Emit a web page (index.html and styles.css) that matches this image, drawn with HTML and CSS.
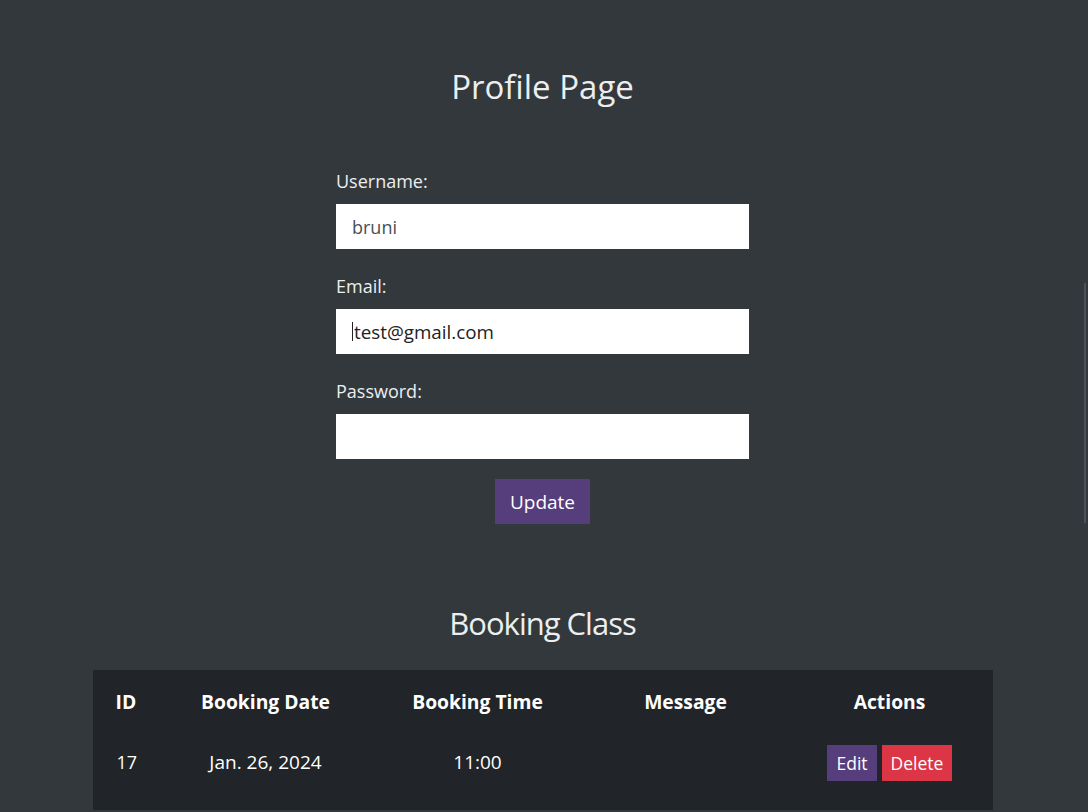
FILE: index.html
```html
<!DOCTYPE html>
<html lang="en">
<head>
<meta charset="utf-8">
<title>Profile Page</title>
<link rel="stylesheet" href="styles.css">
</head>
<body>
<main class="page">
  <h1 class="title">Profile Page</h1>
  <form class="profile-form">
    <div class="field">
      <label class="label" for="username">Username:</label>
      <input class="input input-muted" id="username" type="text" value="bruni">
    </div>
    <div class="field">
      <label class="label" for="email">Email:</label>
      <div class="input-wrap">
        <input class="input input-dark" id="email" type="text" value="test@gmail.com">
        <span class="caret"></span>
      </div>
    </div>
    <div class="field">
      <label class="label" for="password">Password:</label>
      <input class="input" id="password" type="password" value="">
    </div>
    <div class="actions">
      <button type="button" class="btn btn-purple btn-update">Update</button>
    </div>
  </form>

  <h2 class="title title-second">Booking Class</h2>
  <div class="table-wrap">
    <table class="table">
      <colgroup>
        <col class="c-id"><col class="c-date"><col class="c-time"><col class="c-msg"><col class="c-act">
      </colgroup>
      <thead>
        <tr><th>ID</th><th>Booking Date</th><th>Booking Time</th><th>Message</th><th>Actions</th></tr>
      </thead>
      <tbody>
        <tr>
          <td>17</td>
          <td>Jan. 26, 2024</td>
          <td>11:00</td>
          <td></td>
          <td><div class="row-actions"><button type="button" class="btn btn-purple btn-sm btn-edit">Edit</button><button type="button" class="btn btn-red btn-sm btn-delete">Delete</button></div></td>
        </tr>
      </tbody>
    </table>
  </div>
</main>
<div class="scroll-thumb"></div>
</body>
</html>
```

FILE: styles.css
```css
* { box-sizing: border-box; }
html, body { margin: 0; padding: 0; }
body {
  background: #33383c;
  color: #eceef0;
  font-family: "Open Sans", "Noto Sans", sans-serif;
  height: 812px;
  overflow: hidden;
}
.page {
  width: 1085px;
  display: flex;
  flex-direction: column;
  align-items: center;
}
.title {
  margin: 66px 0 0;
  font-size: 33px;
  font-weight: 400;
  line-height: 41px;
  color: #eceef0;
}
.profile-form {
  width: 413px;
  margin-top: 62px;
  display: flex;
  flex-direction: column;
}
.field {
  display: flex;
  flex-direction: column;
  margin-bottom: 25px;
}
.label {
  font-size: 18px;
  line-height: 24px;
  margin-bottom: 11px;
  color: #eceef0;
}
.input-wrap { position: relative; }
.input {
  width: 413px;
  height: 45px;
  border: 0;
  border-radius: 0;
  background: #fff;
  padding: 0 16px;
  font-family: inherit;
  font-size: 18px;
  outline: none;
}
.input-muted { color: #495057; }
.input-dark {
  color: #222;
  font-size: 18.8px;
  padding-left: 18px;
}
.caret {
  position: absolute;
  left: 16px;
  top: 13px;
  width: 1px;
  height: 19px;
  background: #222;
}
.actions {
  display: flex;
  justify-content: center;
  margin-top: -5px;
}
.btn {
  border: 0;
  border-radius: 0;
  color: #fff;
  font-family: inherit;
  cursor: pointer;
}
.btn-purple { background: #563d7c; }
.btn-red { background: #dc3545; }
.btn-update {
  width: 95px;
  height: 45px;
  font-size: 19px;
}
.title-second {
  margin-top: 79px;
  font-size: 31px;
  letter-spacing: -1px;
}
.table-wrap {
  width: 900px;
  margin-top: 26px;
  background: #212428;
  padding-bottom: 16px;
}
.table {
  width: 900px;
  border-collapse: collapse;
  table-layout: fixed;
}
.c-id { width: 68px; }
.c-date { width: 210px; }
.c-time { width: 214px; }
.c-msg { width: 202px; }
.c-act { width: 206px; }
.table th {
  height: 62px;
  font-size: 19.3px;
  font-weight: 700;
  color: #fff;
  text-align: center;
  padding: 0;
}
.table td {
  height: 62px;
  font-size: 19px;
  color: #fff;
  text-align: center;
  padding: 0 0 3px;
}
.table th:first-child, .table td:first-child {
  text-align: left;
  padding-left: 23px;
}
.table td:first-child { padding-left: 24px; font-size: 18px; }
.row-actions {
  display: flex;
  justify-content: center;
  gap: 5px;
  margin-bottom: -3px;
}
.btn-sm {
  height: 36px;
  font-size: 17.5px;
  padding: 0;
}
.btn-edit { width: 50px; }
.btn-delete { width: 70px; }
.scroll-thumb {
  position: fixed;
  right: 2px;
  top: 283px;
  width: 2px;
  height: 240px;
  background: #4c5257;
}
```
